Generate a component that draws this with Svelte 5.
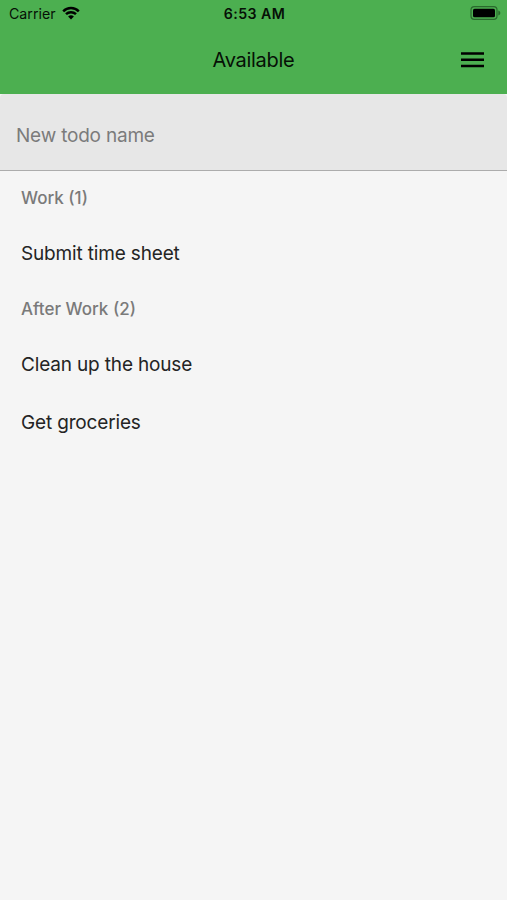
<script lang="ts">
  type Section = { title: string; todos: string[] };

  const sections: Section[] = [
    { title: "Work", todos: ["Submit time sheet"] },
    { title: "After Work", todos: ["Clean up the house", "Get groceries"] }
  ];

  let newTodo = $state("");
</script>

<div class="screen">
  <header class="top">
    <div class="status-bar">
      <div class="carrier">
        <span>Carrier</span>
        <svg class="wifi" viewBox="0 0 18 14" aria-hidden="true">
          <path d="M1.2 5.3a11 11 0 0 1 15.6 0" />
          <path d="M4 8.2a7.1 7.1 0 0 1 10 0" />
          <path class="dot" d="M6.1 10.6a4.1 4.1 0 0 1 5.8 0L9 13.5z" />
        </svg>
      </div>
      <span class="time">6:53 AM</span>
      <svg class="battery" viewBox="0 0 31 14" aria-hidden="true">
        <rect class="shell" x="1" y="0.7" width="26" height="12.6" rx="3.3" />
        <rect x="3" y="2.7" width="22" height="8.6" rx="1.6" />
        <path class="tip" d="M28.3 4.6c1.4.5 2 1.4 2 2.4s-.6 1.9-2 2.4z" />
      </svg>
    </div>
    <div class="nav">
      <h1>Available</h1>
      <button class="menu" aria-label="Menu">
        <svg viewBox="0 0 23 16" aria-hidden="true">
          <path d="M0 1.5h23M0 7.8h23M0 14.1h23" />
        </svg>
      </button>
    </div>
  </header>

  <div class="field">
    <input type="text" placeholder="New todo name" aria-label="New todo name" bind:value={newTodo} />
  </div>

  <main>
    {#each sections as section}
      <h2>{section.title} ({section.todos.length})</h2>
      <ul>
        {#each section.todos as todo}
          <li>{todo}</li>
        {/each}
      </ul>
    {/each}
  </main>
</div>

<style>
  :global(body) {
    margin: 0;
    background: #f5f5f5;
  }

  .screen {
    min-height: 900px;
    background: #f5f5f5;
    color: #242424;
    font-family: Inter, Roboto, sans-serif;
  }

  .top {
    height: 94px;
    background: #4caf50;
    color: #061006;
  }

  .status-bar {
    display: grid;
    grid-template-columns: 1fr auto 1fr;
    align-items: center;
    height: 27px;
    padding: 0 7px 0 9px;
    font-size: 14.2px;
  }

  .carrier {
    display: flex;
    align-items: center;
    gap: 6px;
  }

  .wifi {
    width: 18px;
    height: 14px;
    margin-top: -1px;
    fill: none;
    stroke: #000;
    stroke-width: 2.5;
  }

  .wifi .dot {
    fill: #000;
    stroke: none;
  }

  .time {
    font-weight: 600;
    letter-spacing: 0.4px;
  }

  .battery {
    width: 31px;
    height: 14px;
    margin: -1px -1px 0 0;
    justify-self: end;
  }

  .battery .shell {
    fill: none;
    stroke: #2a6a2d;
    stroke-width: 1.2;
  }

  .battery .tip {
    fill: #2a6a2d;
  }

  .nav {
    display: grid;
    grid-template-columns: 1fr auto 1fr;
    align-items: center;
    height: 66px;
    padding: 0 23px;
  }

  h1 {
    grid-column: 2;
    margin: 0;
    font-size: 20px;
    font-weight: 400;
    letter-spacing: -0.3px;
  }

  .menu {
    display: flex;
    justify-self: end;
    padding: 0;
    border: 0;
    background: none;
  }

  .menu svg {
    width: 23px;
    height: 16px;
    stroke: #000;
    stroke-width: 2.5;
  }

  .field {
    box-sizing: border-box;
    height: 77px;
    border-bottom: 1px solid #acacac;
    border-radius: 4px 4px 0 0;
    background: #e7e7e7;
  }

  input {
    box-sizing: border-box;
    width: 100%;
    height: 76px;
    padding: 7px 16px 0;
    border: 0;
    outline: none;
    background: transparent;
    color: inherit;
    font: inherit;
    font-size: 19px;
    letter-spacing: -0.2px;
  }

  input::placeholder {
    color: #7b7b7b;
    opacity: 1;
  }

  main {
    padding: 1px 21px 0;
  }

  h2 {
    margin: 0;
    color: #7a7a7a;
    font-size: 17px;
    font-weight: 500;
    line-height: 53px;
  }

  ul {
    margin: 0;
    padding: 0;
    list-style: none;
  }

  li {
    font-size: 19px;
    letter-spacing: -0.16px;
    line-height: 57.8px;
  }
</style>
